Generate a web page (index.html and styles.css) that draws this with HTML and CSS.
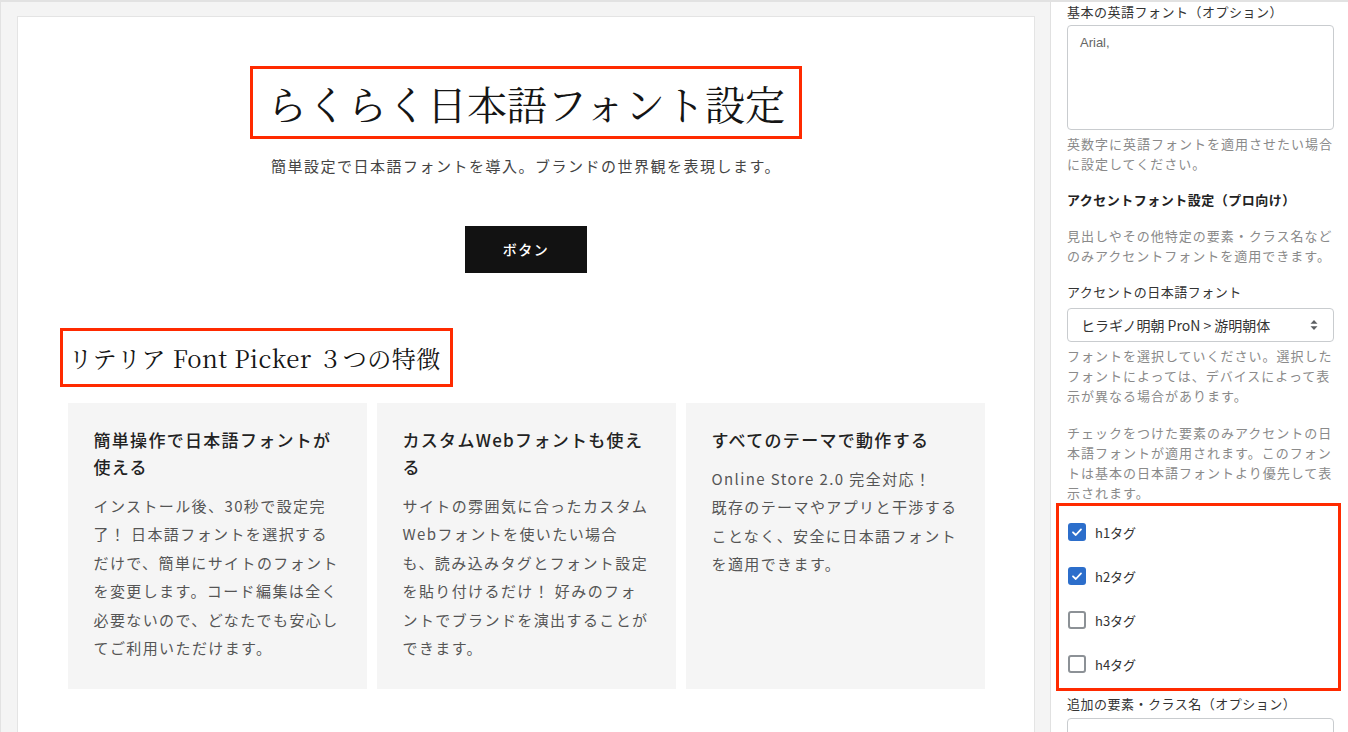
FILE: index.html
```html
<!DOCTYPE html>
<html lang="ja">
<head>
<meta charset="utf-8">
<title>らくらく日本語フォント設定</title>
<link rel="stylesheet" href="styles.css">
</head>
<body>
<div class="app">
  <main class="preview">
    <div class="panel">
      <section class="hero">
        <h1 class="hero-title">らくらく日本語フォント設定</h1>
        <p class="hero-sub">簡単設定で日本語フォントを導入。ブランドの世界観を表現します。</p>
        <a class="btn" href="#">ボタン</a>
      </section>
      <section class="features">
        <h2 class="features-title">リテリア Font Picker ３つの特徴</h2>
        <div class="cards">
          <div class="card">
            <h3 class="card-title">簡単操作で日本語フォントが使える</h3>
            <p class="card-text">インストール後、30秒で設定完了！ 日本語フォントを選択するだけで、簡単にサイトのフォントを変更します。コード編集は全く必要ないので、どなたでも安心してご利用いただけます。</p>
          </div>
          <div class="card">
            <h3 class="card-title">カスタムWebフォントも使える</h3>
            <p class="card-text">サイトの雰囲気に合ったカスタムWebフォントを使いたい場合も、読み込みタグとフォント設定を貼り付けるだけ！ 好みのフォントでブランドを演出することができます。</p>
          </div>
          <div class="card">
            <h3 class="card-title">すべてのテーマで動作する</h3>
            <p class="card-text">Online Store 2.0 完全対応！<br>既存のテーマやアプリと干渉することなく、安全に日本語フォントを適用できます。</p>
          </div>
        </div>
      </section>
    </div>
  </main>
  <aside class="sidebar">
    <div class="field-label">基本の英語フォント（オプション）</div>
    <div class="textarea">Arial,</div>
    <p class="help">英数字に英語フォントを適用させたい場合に設定してください。</p>

    <div class="group-title">アクセントフォント設定（プロ向け）</div>
    <p class="help help-gap">見出しやその他特定の要素・クラス名などのみアクセントフォントを適用できます。</p>

    <div class="field-label label-gap">アクセントの日本語フォント</div>
    <div class="select">
      <span>ヒラギノ明朝 ProN &gt; 游明朝体</span>
      <svg class="select-arrow" width="10" height="12" viewBox="0 0 10 12"><path d="M5 1 L8.5 4.8 H1.5 Z M5 11 L1.5 7.2 H8.5 Z" fill="#5c5f62"/></svg>
    </div>
    <p class="help">フォントを選択していください。選択したフォントによっては、デバイスによって表示が異なる場合があります。</p>
    <p class="help help-gap2">チェックをつけた要素のみアクセントの日本語フォントが適用されます。このフォントは基本の日本語フォントより優先して表示されます。</p>

    <div class="checks">
      <label class="check"><span class="box is-on"><svg width="18" height="18" viewBox="0 0 18 18"><path d="M5 9.3 L7.8 12 L13 6.4" fill="none" stroke="#fff" stroke-width="1.8" stroke-linecap="round" stroke-linejoin="round"/></svg></span>h1タグ</label>
      <label class="check"><span class="box is-on"><svg width="18" height="18" viewBox="0 0 18 18"><path d="M5 9.3 L7.8 12 L13 6.4" fill="none" stroke="#fff" stroke-width="1.8" stroke-linecap="round" stroke-linejoin="round"/></svg></span>h2タグ</label>
      <label class="check"><span class="box"></span>h3タグ</label>
      <label class="check"><span class="box"></span>h4タグ</label>
    </div>

    <div class="field-label label-gap3">追加の要素・クラス名（オプション）</div>
    <div class="input">.button</div>
  </aside>
</div>
</body>
</html>
```

FILE: styles.css
```css
* { box-sizing: border-box; }
html, body { margin: 0; padding: 0; }
body {
  background: #f4f4f4;
  font-family: "Noto Sans CJK JP", "Noto Sans", sans-serif;
  color: #333;
  overflow: hidden;
}
.app {
  display: flex;
  height: 732px;
  border-top: 2px solid #e2e2e2;
  border-left: 1px solid #e2e2e2;
  overflow: hidden;
}
.preview {
  flex: 1;
  padding: 14px 15px 0 16px;
}
.panel {
  background: #fff;
  border: 1px solid #e4e4e4;
  min-height: 760px;
}
.hero {
  text-align: center;
  padding-top: 49px;
}
.hero-title {
  display: inline-block;
  margin: 0;
  border: 3px solid #ff2a00;
  padding: 12px 14px;
  font-family: "Noto Serif CJK JP", "Noto Serif JP", "Liberation Serif", "Noto Sans CJK JP", serif;
  font-weight: 400;
  font-size: 40px;
  line-height: 43px;
  color: #151515;
}
.hero-sub {
  margin: 15px 0 0;
  font-size: 15px;
  line-height: 24px;
  letter-spacing: 1.5px;
  color: #444;
}
.btn {
  display: inline-block;
  margin-top: 48px;
  width: 122px;
  height: 47px;
  line-height: 47px;
  background: #121212;
  color: #fff;
  text-decoration: none;
  font-size: 14px;
  font-weight: 500;
  letter-spacing: 1.5px;
}
.features {
  width: 917px;
  margin: 55px auto 0;
}
.features-title {
  display: inline-block;
  margin: 0 0 0 -8px;
  border: 3px solid #ff2a00;
  padding: 9px 9px 9px 6px;
  font-family: "Noto Serif CJK JP", "Noto Serif JP", "Liberation Serif", "Noto Sans CJK JP", serif;
  font-weight: 400;
  font-size: 24px;
  line-height: 35px;
  letter-spacing: 0.5px;
  color: #151515;
}
.cards {
  display: grid;
  grid-template-columns: repeat(3, 1fr);
  gap: 10px;
  margin-top: 16px;
}
.card {
  background: #f5f5f5;
  padding: 23px 26px 26px;
  min-height: 286px;
}
.card-title {
  margin: 0;
  font-size: 17px;
  font-weight: 500;
  line-height: 27px;
  letter-spacing: 1.3px;
  color: #222;
}
.card-text {
  margin: 12px 0 0;
  font-size: 15px;
  line-height: 28.4px;
  letter-spacing: 1.4px;
  color: #555;
}

/* sidebar */
.sidebar {
  width: 298px;
  flex: none;
  background: #fff;
  border-left: 1px solid #e1e1e1;
  padding: 0 14px 0 16px;
  font-size: 13px;
}
.field-label {
  line-height: 20px;
  letter-spacing: 0.5px;
  color: #333;
}
.label-gap { margin-top: 16px; }
.label-gap3 { margin-top: 3px; }
.textarea {
  margin-top: 3px;
  height: 105px;
  border: 1px solid #c9cccf;
  border-radius: 4px;
  padding: 8px 12px;
  font-family: "Liberation Sans", Arial, sans-serif;
  font-size: 13px;
  line-height: 18px;
  color: #666;
}
.help {
  margin: 4px 0 0;
  line-height: 20px;
  letter-spacing: 1px;
  color: #8a8a8a;
}
.help-gap { margin-top: 16px; }
.help-gap2 { margin-top: 17px; }
.group-title {
  margin-top: 16px;
  line-height: 20px;
  font-weight: 700;
  letter-spacing: 0.5px;
  color: #222;
}
.select {
  margin-top: 6px;
  height: 34px;
  border: 1px solid #c9cccf;
  border-radius: 4px;
  padding: 0 12px 0 13px;
  display: flex;
  align-items: center;
  justify-content: space-between;
  font-size: 14px;
  color: #333;
}
.select-arrow { margin-right: 2px; }
.checks {
  margin: 0 -7px 0 -11px;
  border: 3px solid #ff2a00;
  padding: 4px 0 2px 9px;
}
.check {
  display: flex;
  align-items: center;
  height: 44px;
  gap: 9px;
  font-size: 13px;
  color: #333;
}
.box {
  width: 18px;
  height: 18px;
  border: 2px solid #8c9196;
  border-radius: 3px;
  background: #fff;
  display: flex;
  flex: none;
}
.box.is-on {
  border: none;
  background: #2c6ecb;
}
.input {
  margin-top: 4px;
  height: 36px;
  border: 1px solid #c9cccf;
  border-radius: 4px;
  padding: 10px 12px;
  font-family: "Liberation Sans", Arial, sans-serif;
  font-size: 13px;
  color: #666;
}
```
